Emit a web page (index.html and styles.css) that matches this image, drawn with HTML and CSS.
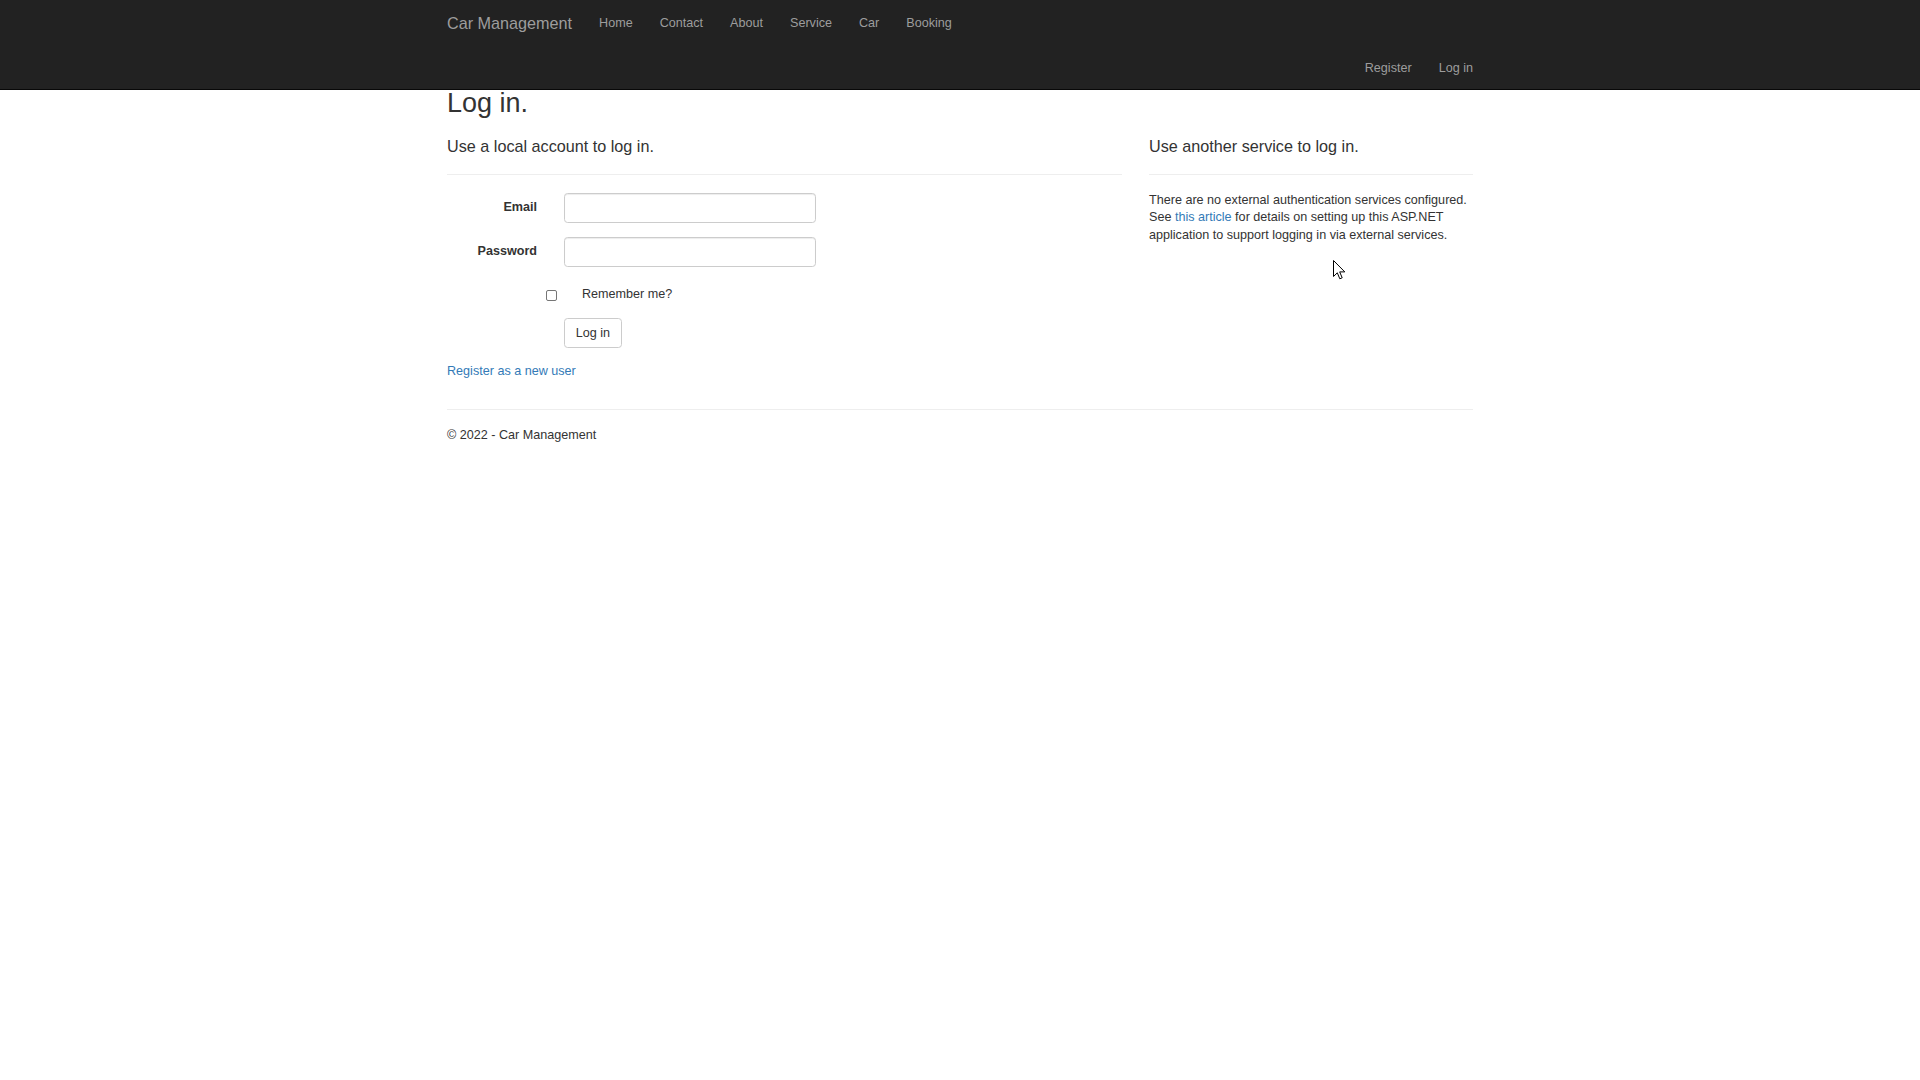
FILE: index.html
```html
<!DOCTYPE html>
<html lang="en">
<head>
<meta charset="utf-8">
<title>Log in - Car Management</title>
<link rel="stylesheet" href="styles.css">
</head>
<body>
<header class="navbar">
  <div class="container">
    <div class="nav-row">
      <a class="brand" href="#">Car Management</a>
      <ul class="nav">
        <li><a href="#">Home</a></li>
        <li><a href="#">Contact</a></li>
        <li><a href="#">About</a></li>
        <li><a href="#">Service</a></li>
        <li><a href="#">Car</a></li>
        <li><a href="#">Booking</a></li>
      </ul>
    </div>
    <div class="nav-row nav-row-right">
      <ul class="nav">
        <li><a href="#">Register</a></li>
        <li><a href="#">Log in</a></li>
      </ul>
    </div>
  </div>
</header>

<main class="container body-content">
  <h2 class="page-title">Log in.</h2>
  <div class="row">
    <section class="col col-main">
      <h4 class="section-title">Use a local account to log in.</h4>
      <hr class="rule">
      <form class="form-horizontal">
        <div class="form-group">
          <label class="control-label" for="email">Email</label>
          <div class="field"><input class="form-control" id="email" type="text"></div>
        </div>
        <div class="form-group">
          <label class="control-label" for="password">Password</label>
          <div class="field"><input class="form-control" id="password" type="password"></div>
        </div>
        <div class="form-group form-group-check">
          <div class="field checkbox">
            <input type="checkbox" id="remember" class="check">
            <label for="remember">Remember me?</label>
          </div>
        </div>
        <div class="form-group form-group-btn">
          <div class="field"><button type="button" class="btn">Log in</button></div>
        </div>
      </form>
      <p class="register-link"><a href="#">Register as a new user</a></p>
    </section>
    <section class="col col-side">
      <h4 class="section-title">Use another service to log in.</h4>
      <hr class="rule">
      <div class="external">
        <p>There are no external authentication services configured. See <a href="#">this article</a> for details on setting up this ASP.NET application to support logging in via external services.</p>
      </div>
    </section>
  </div>
  <hr class="footer-rule">
  <footer class="footer">
    <p>&copy; 2022 - Car Management</p>
  </footer>
</main>

<svg class="cursor" width="13" height="21" viewBox="0 0 13 21" aria-hidden="true">
  <path d="M0.5 0.5 L0.5 16.5 L4.3 12.8 L6.8 18.8 L9.2 17.8 L6.7 11.9 L11.8 11.9 Z" fill="#fff" stroke="#000" stroke-width="1" stroke-linejoin="miter"/>
</svg>
</body>
</html>
```

FILE: styles.css
```css
* { box-sizing: border-box; }

html, body {
  margin: 0;
  padding: 0;
  background: #fff;
}

body {
  font-family: "Liberation Sans", Arial, Helvetica, sans-serif;
  font-size: 12.6px;
  line-height: 18px;
  color: #333;
  position: relative;
  min-height: 1080px;
}

a { color: #337ab7; text-decoration: none; }

.container {
  width: 1053px;
  margin: 0 auto;
  padding: 0 13.5px;
}

/* Navbar */
.navbar {
  background: #222;
  border-bottom: 1px solid #080808;
  height: 90px;
}

.nav-row {
  display: flex;
  align-items: flex-start;
  height: 45px;
}

.nav-row-right {
  justify-content: flex-end;
  height: 44px;
  margin-right: -13.5px;
}

.brand {
  display: block;
  margin-left: -13.5px;
  padding: 13.5px;
  font-size: 16.2px;
  line-height: 18px;
  height: 45px;
  color: #9d9d9d;
}

.nav {
  display: flex;
  list-style: none;
  margin: 0;
  padding: 0;
}

.nav a {
  display: block;
  padding: 13.5px;
  line-height: 18px;
  color: #9d9d9d;
}

/* Content */
.page-title {
  margin: 0 0 9px;
  font-size: 27px;
  font-weight: 500;
  line-height: 27px;
  color: #333;
}

.row {
  display: grid;
  grid-template-columns: 702px 351px;
  margin: 0 -13.5px;
}

.col {
  padding: 0 13.5px;
}

.section-title {
  margin: 11.5px 0 0;
  font-size: 16.2px;
  font-weight: 500;
  line-height: 17.8px;
}

.rule {
  margin: 18.5px 0 18px;
  border: 0;
  border-top: 1px solid #eee;
  height: 0;
}

.col-side .rule {
  margin-bottom: 17px;
}

.form-horizontal {
  margin: 0;
}

.form-group {
  display: grid;
  grid-template-columns: 117px 585px;
  margin: 0 -13.5px 14px;
}

.control-label {
  padding: 5px 13.5px 0;
  text-align: right;
  font-weight: bold;
  line-height: 18px;
}

.field {
  grid-column: 2;
  padding: 0 13.5px;
}

.form-control {
  display: block;
  width: 100%;
  max-width: 252px;
  height: 30px;
  padding: 5.4px 10.8px;
  font-family: inherit;
  font-size: 12.6px;
  color: #555;
  background: #fff;
  border: 1px solid #ccc;
  border-radius: 3.6px;
  box-shadow: inset 0 1px 1px rgba(0, 0, 0, .075);
  margin: 0;
}

.form-group-check {
  margin-bottom: 13px;
}

.checkbox {
  display: flex;
  align-items: flex-start;
  height: 24px;
  padding-top: 4.5px;
}

.check {
  appearance: none;
  -webkit-appearance: none;
  width: 11px;
  height: 11px;
  margin: 4.5px 25px 0 -18px;
  border: 1px solid #767676;
  border-radius: 2px;
  background: #fff;
  flex: none;
}

.checkbox label {
  line-height: 18px;
  font-weight: normal;
}

.form-group-btn {
  margin-bottom: 13.5px;
}

.btn {
  display: inline-block;
  height: 30.5px;
  padding: 5px 10.8px;
  font-family: inherit;
  font-size: 12.6px;
  line-height: 18px;
  color: #333;
  background: #fff;
  border: 1px solid #ccc;
  border-radius: 3.6px;
  margin: 0;
}

.register-link {
  margin: 0 0 9px;
}

.external p {
  margin: 0 0 9px;
  line-height: 17.5px;
}

.footer-rule {
  margin: 20px 0 16px;
  border: 0;
  border-top: 1px solid #eee;
  height: 0;
}

.footer p {
  margin: 0 0 9px;
}

.cursor {
  position: absolute;
  left: 1333px;
  top: 260px;
}
```
